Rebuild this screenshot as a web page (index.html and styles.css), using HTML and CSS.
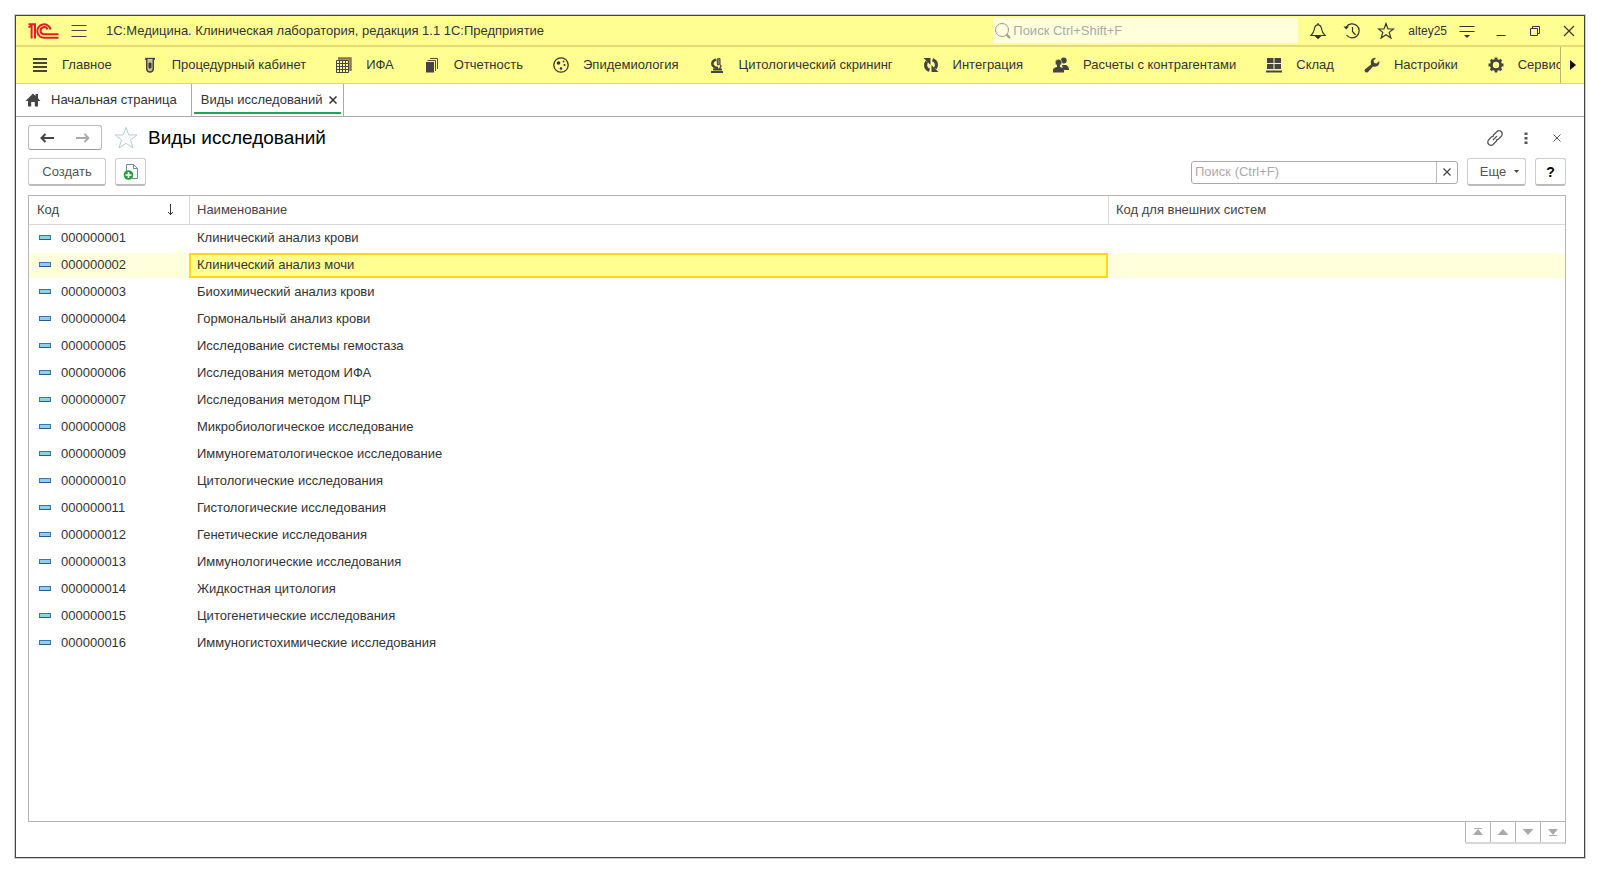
FILE: index.html
```html
<!DOCTYPE html>
<html lang="ru">
<head>
<meta charset="utf-8">
<title>Виды исследований</title>
<link rel="stylesheet" href="styles.css">
</head>
<body>
<div class="window">
  <header class="titlebar">
    <svg class="logo" width="32" height="18" viewBox="0 0 32 18" fill="none" stroke="#e31e24" stroke-width="2">
      <path d="M0.500 5.500L3.600 3.500V16.500M0.500 2.200H7V16.500"/>
      <path d="M22.500 7.500A6.700 6.700 0 1 0 16.500 15.700H30.500"/>
      <path d="M19.500 7.500A3.600 3.600 0 1 0 16 12.300H30.500"/>
    </svg>
    <button class="icon-btn menu-btn" aria-label="Меню"><svg width="16" height="16" viewBox="0 0 16 16" stroke="#444"><path d="M0.500 2.500H15.500M0.500 7.500H15.500M0.500 13.500H15.500"/></svg></button>
    <span class="app-title">1С:Медицина. Клиническая лаборатория, редакция 1.1 1С:Предприятие</span>
    <label class="global-search">
      <svg width="18" height="18" viewBox="0 0 18 18" fill="none" stroke="#999"><circle cx="8" cy="8" r="6.500"/><path d="M12.500 12.500L16 16" stroke-width="2"/></svg>
      <input type="text" aria-label="Поиск" placeholder="Поиск Ctrl+Shift+F">
    </label>
    <div class="title-tools">
      <button class="icon-btn" aria-label="Уведомления"><svg width="18" height="18" viewBox="0 0 18 18" fill="none" stroke="#333" stroke-width="1.200"><path d="M2 13.500H16C13 10.500 13 9 12.500 6.500C12 4 11 2.800 9 2.800S6 4 5.500 6.500C5 9 5 10.500 2 13.500Z"/><path d="M9 1V3"/><path d="M7 14.500H11L9 16.500Z" fill="#333"/></svg></button>
      <button class="icon-btn" aria-label="История"><svg width="18" height="18" viewBox="0 0 18 18" fill="none" stroke="#333" stroke-width="1.200"><path d="M3.300 5A7 7 0 1 1 3.500 13M9.500 5V9.500L12.500 13"/><path d="M0.500 4.500H6L3.200 7.500Z" fill="#333" stroke="none"/></svg></button>
      <button class="icon-btn" aria-label="Избранное"><svg width="18" height="18" viewBox="0 0 18 18" fill="none" stroke="#333" stroke-width="1.200"><path d="M9 1.500L11 7H16.500L12.200 10.400L13.900 16L9 12.700L4.100 16L5.800 10.400L1.500 7H7Z"/></svg></button>
      <span class="user">altey25</span>
      <button class="icon-btn" aria-label="Настройка"><svg width="16" height="18" viewBox="0 0 16 18" stroke="#333" stroke-width="1.200"><path d="M0.500 4.500H15.500M0.500 9.500H15.500"/><path d="M5 13H11L8 16Z" fill="#333" stroke="none"/></svg></button>
    </div>
    <div class="win-tools">
      <button class="icon-btn" aria-label="Свернуть"><svg width="12" height="12" viewBox="0 0 12 12" stroke="#333"><path d="M1.500 10.500H10.500"/></svg></button>
      <button class="icon-btn" aria-label="Развернуть"><svg width="12" height="12" viewBox="0 0 12 12" fill="none" stroke="#333"><path d="M1.500 3.500H8.500V10.500H1.500ZM3.500 3.500V1.500H10.500V8.500H8.500"/></svg></button>
      <button class="icon-btn" aria-label="Закрыть"><svg width="12" height="12" viewBox="0 0 12 12" stroke="#333" stroke-width="1.200"><path d="M1 1L11 11M11 1L1 11"/></svg></button>
    </div>
  </header>

  <nav class="sections">
    <div class="section-list">
      <a href="#"><svg viewBox="0 0 16 16" stroke="#444" stroke-width="2"><path d="M1 2H15M1 6H15M1 10H15M1 14H15"/></svg>Главное</a>
      <a href="#"><svg viewBox="0 0 16 16" fill="none" stroke="#444" stroke-width="1.500"><path d="M3 1.800H13" stroke-width="2"/><path d="M4.700 2V12Q5 15 8 15T11.300 12V2" fill="#c9c592"/><path d="M7 6H9V11H7Z" fill="#333" stroke-width="1"/></svg>Процедурный кабинет</a>
      <a href="#"><svg viewBox="0 0 16 16" fill="none" stroke="#444"><path d="M0.500 3.500H12.500V15.500H0.500ZM3.500 3.500V15.500M6.500 3.500V15.500M9.500 3.500V15.500M0.500 6.500H12.500M0.500 9.500H12.500M0.500 12.500H12.500"/><path d="M2 1.500H14.500V14" stroke="#8a6f4c" stroke-width="2.400"/></svg>ИФА</a>
      <a href="#"><svg viewBox="0 0 16 16" fill="none" stroke="#544a38"><path d="M2 5H10V15.500H2Z" fill="#444" stroke="none"/><path d="M3.500 3.500H11.500V14M6 1.500H13.500V12"/></svg>Отчетность</a>
      <a href="#"><svg viewBox="0 0 16 16" fill="none" stroke="#333" stroke-width="1.300"><circle cx="8" cy="8" r="7.200"/><g fill="#333" stroke="none"><circle cx="5.500" cy="6" r="1.800"/><circle cx="10.500" cy="4.500" r="0.900"/><circle cx="11.500" cy="8" r="1.100"/><circle cx="8" cy="11.500" r="1.300"/></g></svg>Эпидемиология</a>
      <a href="#"><svg viewBox="0 0 16 16" fill="none" stroke="#444"><path d="M2 15H14M4 12.500H13" stroke-width="2"/><path d="M7 2.500Q2.500 4 3.500 8Q5 11 9 11" stroke-width="2.500"/><path d="M8 2L11 1.500V7L8.500 8Z" fill="#8c8c80"/><path d="M11 7.500L12 9L10 13" stroke-width="1.300"/></svg>Цитологический скрининг</a>
      <a href="#"><svg viewBox="0 0 16 16" fill="none" stroke="#444" stroke-width="3.200"><path d="M6.500 13.300C2.500 12 1.500 8 3.700 4.500M9.500 2.700C13.500 4 14.500 8 12.300 11.500"/><path d="M0.500 1H7.500V8ZM15.500 15H8.500V8Z" fill="#444" stroke="none"/></svg>Интеграция</a>
      <a href="#"><svg viewBox="0 0 16 16" fill="#444"><circle cx="10.800" cy="3.500" r="2.900"/><path d="M9 8H13Q16 9 16 13H10Z"/><circle cx="5.500" cy="5.500" r="3.300" stroke="#ffff91" stroke-width="0.600"/><path d="M0 15.500V13Q0 11 4 10V8H7V10Q11 11 11 13V15.500Z"/></svg>Расчеты с контрагентами</a>
      <a href="#"><svg viewBox="0 0 16 16" fill="#444"><path d="M1 1H7.500V6H1ZM8.500 1H15V6H8.500ZM1 7H7.500V12H1ZM8.500 7H15V12H8.500ZM0 13.500H16V15.500H0Z"/></svg>Склад</a>
      <a href="#"><svg viewBox="0 0 16 16" fill="#444"><path d="M0.800 12.500L7 7.500Q6 3 9 1.200Q10.500 0.500 12 1L9.500 3.700L10.300 6L12.600 6.500L15.200 4Q16 7 13.500 9Q11.500 10.300 9 9.500L3.800 15.200Q2 16 1 14.800Q0 13.500 0.800 12.500Z"/></svg>Настройки</a>
      <a href="#"><svg viewBox="0 0 16 16" fill="none" stroke="#444"><circle cx="8" cy="8" r="4.600" stroke-width="2.800"/><path d="M8 0.500V3M8 13V15.500M0.500 8H3M13 8H15.500M2.700 2.700L4.500 4.500M11.500 11.500L13.300 13.300M2.700 13.300L4.500 11.500M11.500 4.500L13.300 2.700" stroke-width="2.800"/></svg>Сервис</a>
    </div>
    <button class="scroll-right" aria-label="Вперед"><svg width="6" height="10" viewBox="0 0 6 10"><path d="M0 0L6 5L0 10Z" fill="#111"/></svg></button>
  </nav>

  <div class="tabs">
    <a class="tab home" href="#"><svg width="16" height="14" viewBox="0 0 16 14" fill="#444"><path d="M8 0.500L10.500 3V1H13V5.300L15.500 8H13V13.500H9.800V9H6.200V13.500H3V8H0.500Z"/></svg>Начальная страница</a>
    <div class="tab active"><span>Виды исследований</span><button class="icon-btn" aria-label="Закрыть вкладку"><svg width="8" height="8" viewBox="0 0 8 8" stroke="#333" stroke-width="1.500"><path d="M0.500 0.500L7.500 7.500M7.500 0.500L0.500 7.500"/></svg></button></div>
  </div>

  <main class="page">
    <div class="page-head">
      <div class="history">
        <button aria-label="Назад"><svg width="14" height="10" viewBox="0 0 14 10" fill="none" stroke="#444" stroke-width="2"><path d="M14 5H2M5.500 1L1.500 5L5.500 9"/></svg></button>
        <button aria-label="Вперед"><svg width="14" height="10" viewBox="0 0 14 10" fill="none" stroke="#aaa" stroke-width="1.800"><path d="M0 5H12M8.500 1L12.500 5L8.500 9"/></svg></button>
      </div>
      <button class="icon-btn star" aria-label="В избранное"><svg width="24" height="24" viewBox="0 0 24 24" fill="none" stroke="#b4cfd0"><path d="M12 1.500L14.700 9H23L16.500 13.900L19 22L12 17.300L5 22L7.500 13.900L1 9H9.300Z"/></svg></button>
      <h1>Виды исследований</h1>
      <div class="page-tools">
        <button class="icon-btn" aria-label="Ссылка"><svg width="18" height="18" viewBox="0 0 18 18" fill="none" stroke="#555" stroke-width="1.200"><path d="M7 6.500L11 2.500Q13 0.800 15.200 2.500Q17.200 4.800 15.500 7L12.500 10Q11.500 11 10 10.800M11 11.500L7 15.500Q5 17.200 2.800 15.500Q0.800 13.200 2.500 11L5.500 8Q6.500 7 8 7.200M7 11L11 7"/></svg></button>
        <button class="icon-btn" aria-label="Дополнительно"><svg width="4" height="12" viewBox="0 0 4 12" fill="#555"><path d="M0.500 0.500H3.500V3H0.500ZM0.500 5H3.500V7.500H0.500ZM0.500 9.500H3.500V12H0.500Z"/></svg></button>
        <button class="icon-btn" aria-label="Закрыть"><svg width="8" height="8" viewBox="0 0 8 8" stroke="#555"><path d="M0.500 0.500L7.500 7.500M7.500 0.500L0.500 7.500"/></svg></button>
      </div>
    </div>

    <div class="commands">
      <button class="btn create">Создать</button>
      <button class="btn copy" aria-label="Создать копированием"><svg width="16" height="18" viewBox="0 0 16 18" fill="none"><path d="M3.500 9V1.500H10.500L14.500 5.500V15.500H9" stroke="#7288a8" fill="#fff"/><path d="M10.500 1.500V5.500H14.500" stroke="#7288a8"/><circle cx="5.500" cy="12" r="4.800" fill="#22a038"/><path d="M5.500 9V15M2.500 12H8.500" stroke="#fff" stroke-width="1.600"/></svg></button>
      <div class="search">
        <input type="text" aria-label="Поиск в списке" placeholder="Поиск (Ctrl+F)">
        <button aria-label="Очистить"><svg width="8" height="8" viewBox="0 0 8 8" stroke="#444" stroke-width="1.200"><path d="M0.500 0.500L7.500 7.500M7.500 0.500L0.500 7.500"/></svg></button>
      </div>
      <button class="btn more">Еще<svg width="5" height="3" viewBox="0 0 5 3" fill="#444"><path d="M0 0H5L2.500 3Z"/></svg></button>
      <button class="btn help">?</button>
    </div>

    <div class="list">
      <table>
        <colgroup><col class="col-code"><col><col class="col-ext"></colgroup>
        <thead>
          <tr><th><div class="sorted">Код<svg width="8" height="12" viewBox="0 0 8 12" fill="none" stroke="#333"><path d="M3.500 0V11M1 8L3.500 10.500L6 8"/></svg></div></th><th>Наименование</th><th>Код для внешних систем</th></tr>
        </thead>
        <tbody>
          <tr><td><i class="mark"></i>000000001</td><td>Клинический анализ крови</td><td></td></tr>
          <tr class="selected"><td><i class="mark"></i>000000002</td><td class="current">Клинический анализ мочи</td><td></td></tr>
          <tr><td><i class="mark"></i>000000003</td><td>Биохимический анализ крови</td><td></td></tr>
          <tr><td><i class="mark"></i>000000004</td><td>Гормональный анализ крови</td><td></td></tr>
          <tr><td><i class="mark"></i>000000005</td><td>Исследование системы гемостаза</td><td></td></tr>
          <tr><td><i class="mark"></i>000000006</td><td>Исследования методом ИФА</td><td></td></tr>
          <tr><td><i class="mark"></i>000000007</td><td>Исследования методом ПЦР</td><td></td></tr>
          <tr><td><i class="mark"></i>000000008</td><td>Микробиологическое исследование</td><td></td></tr>
          <tr><td><i class="mark"></i>000000009</td><td>Иммуногематологическое исследование</td><td></td></tr>
          <tr><td><i class="mark"></i>000000010</td><td>Цитологические исследования</td><td></td></tr>
          <tr><td><i class="mark"></i>000000011</td><td>Гистологические исследования</td><td></td></tr>
          <tr><td><i class="mark"></i>000000012</td><td>Генетические исследования</td><td></td></tr>
          <tr><td><i class="mark"></i>000000013</td><td>Иммунологические исследования</td><td></td></tr>
          <tr><td><i class="mark"></i>000000014</td><td>Жидкостная цитология</td><td></td></tr>
          <tr><td><i class="mark"></i>000000015</td><td>Цитогенетические исследования</td><td></td></tr>
          <tr><td><i class="mark"></i>000000016</td><td>Иммуногистохимические исследования</td><td></td></tr>
        </tbody>
      </table>
    </div>
    <div class="pager">
      <button aria-label="В начало"><svg width="12" height="8" viewBox="0 0 12 8" fill="#aaa"><path d="M2 0H10V1H2ZM6 1L11 7H1Z"/></svg></button>
      <button aria-label="Вверх"><svg width="12" height="8" viewBox="0 0 12 8" fill="#aaa"><path d="M6 1L11.500 7H0.500Z"/></svg></button>
      <button aria-label="Вниз"><svg width="12" height="8" viewBox="0 0 12 8" fill="#aaa"><path d="M6 7L11.500 1H0.500Z"/></svg></button>
      <button aria-label="В конец"><svg width="12" height="8" viewBox="0 0 12 8" fill="#aaa"><path d="M2 7H10V8H2ZM6 7L11 1H1Z"/></svg></button>
    </div>
  </main>
</div>
</body>
</html>
```
FILE: styles.css
```css
* { box-sizing: border-box; }

body {
  margin: 0;
  min-height: 100vh;
  padding: 15px;
  display: flex;
  background: #fff;
  color: #333;
  font: 13px/16px "Liberation Sans", Arial, sans-serif;
}

button, input { font: inherit; color: inherit; }
svg { display: block; flex: none; }
a { color: inherit; text-decoration: none; }

button {
  display: flex;
  align-items: center;
  justify-content: center;
  margin: 0;
  padding: 0;
  border: 0;
  background: none;
}

.window {
  flex: 1;
  min-width: 0;
  display: flex;
  flex-direction: column;
  border: 1px solid #444;
  box-shadow: 0 0 0 1px #ccc;
}

.titlebar {
  display: flex;
  align-items: center;
  height: 31px;
  padding: 0 9px 0 12px;
  background: #ffff91;
  border-bottom: 2px solid #e6da78;
}

.menu-btn { margin: 0 19px 0 11px; }

.app-title { flex: 1; white-space: nowrap; }

.global-search {
  display: flex;
  align-items: center;
  gap: 1px;
  width: 305px;
  height: 25px;
  padding-left: 1px;
  background: #ffffdc;
}

.global-search input {
  flex: 1;
  min-width: 0;
  padding: 0;
  border: 0;
  outline: 0;
  background: none;
}

::placeholder { color: #aaa; opacity: 1; }

.title-tools {
  display: flex;
  align-items: center;
  gap: 16px;
  margin-left: 11px;
}

.user { margin: 0 -4px 0 -3px; font-size: 12px; }

.win-tools { display: flex; gap: 22px; margin-left: 20px; }

.sections {
  display: flex;
  height: 37px;
  background: #ffff91;
  border-bottom: 1px solid #d8d488;
}

.section-list {
  flex: 1;
  min-width: 0;
  display: flex;
  gap: 30px;
  padding-left: 16px;
  overflow: hidden;
}

.section-list a {
  display: flex;
  align-items: center;
  gap: 14px;
  white-space: nowrap;
}

.section-list svg { width: 16px; height: 16px; }

.scroll-right { width: 24px; border-left: 1px solid #b9b676; }

.tabs {
  display: flex;
  height: 33px;
  border-bottom: 1px solid #aaa;
}

.tab {
  display: flex;
  align-items: center;
  border-right: 1px solid #aaa;
}

.home { gap: 10px; padding: 0 14px 0 9px; }

.active {
  position: relative;
  gap: 6px;
  padding: 0 6px 0 9px;
}

.active::after {
  content: "";
  position: absolute;
  left: 2px;
  right: 2px;
  bottom: 2px;
  height: 2px;
  background: #1fa35a;
}

.page {
  flex: 1;
  display: flex;
  flex-direction: column;
  padding: 8px 18px 13px 12px;
}

.page-head { display: flex; align-items: center; height: 25px; }

.history {
  display: flex;
  height: 25px;
  border: 1px solid #bbb;
  border-bottom-color: #999;
  border-radius: 3px;
}

.history button { width: 36px; }

.star { margin: 0 10px 0 12px; }

h1 {
  margin: 0;
  color: #000;
  font-size: 19px;
  line-height: 24px;
  font-weight: 400;
}

.page-tools {
  display: flex;
  align-items: center;
  gap: 20px;
  margin-left: auto;
  padding-right: 5px;
}

.page-tools button:last-child { margin-left: 5px; }

.commands {
  display: flex;
  align-items: center;
  gap: 9px;
  margin: 8px 0 9px;
}

.btn {
  height: 28px;
  border: 1px solid #ccc;
  border-bottom: 2px solid #bbb;
  border-radius: 3px;
  background: #fff;
}

.create { width: 78px; color: #555; }
.copy { width: 31px; }
.more { width: 59px; gap: 8px; padding-left: 6px; color: #555; }
.help { width: 31px; color: #000; font-size: 14px; font-weight: 700; }

.search {
  display: flex;
  width: 267px;
  height: 23px;
  margin-left: auto;
  border: 1px solid #aaa;
  border-radius: 3px;
}

.search input {
  flex: 1;
  min-width: 0;
  padding: 0 3px;
  border: 0;
  outline: 0;
  background: none;
}

.search button { width: 21px; border-left: 1px solid #bbb; }

.list { flex: 1; border: 1px solid #b4b4b4; }

table {
  width: 100%;
  table-layout: fixed;
  border-collapse: separate;
  border-spacing: 0;
}

.col-code { width: 160px; }
.col-ext { width: 457px; }

th {
  height: 29px;
  padding: 0 8px;
  border-bottom: 1px solid #d8d8d8;
  color: #444;
  font-weight: 400;
  text-align: left;
}

th + th { padding-left: 7px; border-left: 1px solid #d8d8d8; }

.sorted {
  display: flex;
  align-items: center;
  justify-content: space-between;
  padding-right: 6px;
}

td {
  height: 27px;
  padding: 0 8px 1px;
  border: solid #fff;
  border-width: 1px 0;
  background-clip: padding-box;
}

td:first-child { padding-left: 10px; }

.mark {
  display: inline-block;
  width: 12px;
  height: 5px;
  margin-right: 10px;
  border: 1px solid #3f74a6;
  border-bottom-color: #2c5a8c;
  background: #8fd0ee;
  vertical-align: 2px;
}

.selected td { background-color: #ffffdc; }

.selected .current {
  background-color: #ffff91;
  box-shadow: inset 0 0 0 2px #ffd817;
}

.pager {
  display: flex;
  align-self: flex-end;
  border: solid #b4b4b4;
  border-width: 0 1px 2px 0;
  border-bottom-color: #d8d8d8;
}

.pager button {
  width: 25px;
  height: 20px;
  border-left: 1px solid #b4b4b4;
}
```
